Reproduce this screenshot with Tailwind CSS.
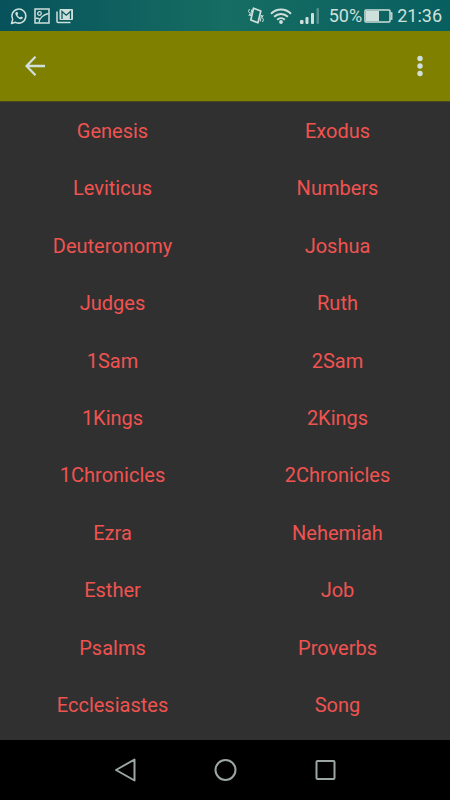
<!DOCTYPE html>
<html lang="en">
  <head>
    <meta charset="UTF-8" />
    <meta name="viewport" content="width=device-width, initial-scale=1.0" />
    <title>Books</title>
    <script src="https://cdn.jsdelivr.net/npm/@tailwindcss/browser@4"></script>
  </head>

  <body class="flex min-h-screen flex-col bg-[#303030] font-['Roboto',sans-serif] text-[#cfe0dc]">
    <!-- status bar -->
    <div class="flex h-[31px] items-center justify-between bg-linear-to-r from-[#07525b] via-[#166d62] to-[#075f60] pr-2 pl-[10px]">
      <div class="flex items-center gap-[6px]">
        <svg class="size-[18px]" viewBox="0 0 18 18" fill="none" stroke="currentColor" stroke-width="1.5">
          <path d="M1.5 16.5l1.2-4A7 7 0 1 1 5.6 15.3z" stroke-linejoin="round" />
          <path d="M5.8 5.2C5 6 5 7.5 7 9.9c2 2.2 4.1 3 5.3 1.9.6-.5.6-1.2.4-1.5l-1.7-.9-1 1C8.8 9.9 7.9 8.9 7.4 7.9l.8-1-.7-1.8c-.5-.3-1.3-.2-1.7.1z" fill="currentColor" stroke="none" />
        </svg>
        <svg class="size-4" viewBox="0 0 16 16" fill="none" stroke="currentColor" stroke-width="1.5">
          <rect x="1" y="1" width="14" height="14" />
          <circle cx="5.5" cy="5.5" r="1.8" stroke-width="1.3" />
          <path d="M5 14.5C5.5 10 9.5 6.5 14.5 5.5M1.5 10.5C3 10 4.500 10.500 6 11.500" />
        </svg>
        <svg class="h-4 w-[18px]" viewBox="0 0 18 16" fill="none" stroke="currentColor" stroke-width="1.5">
          <path d="M1 3.5V13.5Q1 14.5 2 14.5H14.5" />
          <rect x="3.5" y="1" width="13.5" height="11" rx="1" fill="currentColor" stroke="none" />
          <path d="M6 11V3.5L10.250 7.2L14.5 3.5V11" stroke="#0b5a5c" stroke-width="1.3" />
        </svg>
      </div>
      <div class="flex items-center">
        <svg class="h-[17px] w-4" viewBox="0 0 16 17" fill="none" stroke="currentColor">
          <path d="M5.500 1.200L12.800 4L10 15.800L2.800 13z" stroke-width="1.7" stroke-linejoin="round" />
          <path d="M1.500 2L.5 4.500L2 6.500L.8 9M3.800 2.500L2.400 9M14.500 15L15.500 12.500L14 10.500L15.200 8M12.200 14.500L13.600 8" />
        </svg>
        <svg class="ml-[6px] h-4 w-[22px]" viewBox="0 0 22 16" fill="none" stroke="currentColor" stroke-width="2">
          <path d="M1 5.7C6.8.2 15.2.2 21 5.7M4.1 8.8C8.1 5 13.9 5 17.9 8.8M7.2 11.8C9.4 9.8 12.6 9.8 14.8 11.8" />
          <circle cx="11" cy="14" r="1.9" fill="currentColor" stroke="none" />
        </svg>
        <svg class="ml-2 h-4 w-5" viewBox="0 0 20 16" fill="currentColor">
          <rect x="0" y="12" width="3.5" height="4" rx="1" />
          <rect x="5.5" y="9" width="3" height="7" rx="1" />
          <rect x="11" y="5" width="3" height="11" rx="1" />
          <rect x="16.5" y="0" width="2.5" height="16" rx="1" opacity=".35" />
        </svg>
        <span class="ml-[9px] text-lg leading-[31px]">50%</span>
        <svg class="ml-[2px] h-[14px] w-[29px]" viewBox="0 0 29 14">
          <rect x="1" y="1" width="25" height="12" rx="1" fill="none" stroke="currentColor" stroke-width="1.5" />
          <rect x="2" y="2" width="13" height="10" fill="currentColor" />
          <path d="M26.5 4h1.3v6h-1.3" fill="none" stroke="currentColor" stroke-width="1.3" />
        </svg>
        <span class="ml-1 text-lg leading-[31px]">21:36</span>
      </div>
    </div>

    <!-- toolbar -->
    <header class="flex h-[71px] items-center justify-between border-b border-[#484823] bg-[#808000] px-5">
      <button class="flex size-[30px] items-center justify-center" aria-label="Back">
        <svg class="size-5" viewBox="0 0 20 20" fill="none" stroke="currentColor" stroke-width="2.3">
          <path d="M10.5 .8L1.5 10L10.5 19.2M1.5 10H20" />
        </svg>
      </button>
      <button class="flex h-[30px] w-5 items-center justify-center" aria-label="More options">
        <svg class="h-[22px] w-[6px]" viewBox="0 0 6 22" fill="currentColor">
          <circle cx="3" cy="3.5" r="2.7" />
          <circle cx="3" cy="11" r="2.7" />
          <circle cx="3" cy="18.5" r="2.7" />
        </svg>
      </button>
    </header>

    <!-- books -->
    <main class="grid flex-1 auto-rows-fr grid-cols-2 pb-[6px] text-xl text-[#ef5350]">
      <button>Genesis</button>
      <button>Exodus</button>
      <button>Leviticus</button>
      <button>Numbers</button>
      <button>Deuteronomy</button>
      <button>Joshua</button>
      <button>Judges</button>
      <button>Ruth</button>
      <button>1Sam</button>
      <button>2Sam</button>
      <button>1Kings</button>
      <button>2Kings</button>
      <button>1Chronicles</button>
      <button>2Chronicles</button>
      <button>Ezra</button>
      <button>Nehemiah</button>
      <button>Esther</button>
      <button>Job</button>
      <button>Psalms</button>
      <button>Proverbs</button>
      <button>Ecclesiastes</button>
      <button>Song</button>
    </main>

    <!-- navigation bar -->
    <nav class="flex h-[60px] items-center justify-center gap-[76px] bg-black text-[#9ba6a5]">
      <button aria-label="Back">
        <svg class="size-6" viewBox="0 0 24 24" fill="none" stroke="currentColor" stroke-width="2">
          <path d="M3 12L21.5 1.5V22.5z" stroke-linejoin="round" />
        </svg>
      </button>
      <button aria-label="Home">
        <svg class="size-6" viewBox="0 0 24 24" fill="none" stroke="currentColor" stroke-width="2">
          <circle cx="12.5" cy="12" r="10" />
        </svg>
      </button>
      <button aria-label="Recent apps">
        <svg class="size-6" viewBox="0 0 24 24" fill="none" stroke="currentColor" stroke-width="2">
          <rect x="3.5" y="3" width="18" height="18" rx="1" />
        </svg>
      </button>
    </nav>
  </body>
</html>
